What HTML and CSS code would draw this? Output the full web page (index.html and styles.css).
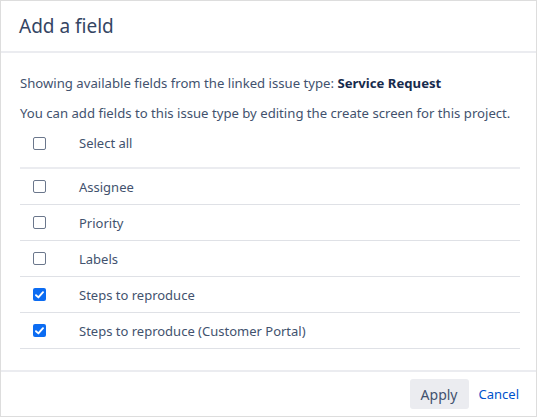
FILE: index.html
```html
<!DOCTYPE html>
<html>
<head>
    <meta charset="utf-8" />
    <title>Add a field</title>
    <link rel="stylesheet" href="styles.css">
</head>
<body>
    <div class="dialog">
        <div class="dialog-header">
            <h2>Add a field</h2>
        </div>
        <div class="dialog-body">
            <p>Showing available fields from the linked issue type: <strong>Service Request</strong></p>
            <p>You can add fields to this issue type by editing the create screen for this project.</p>
            <div class="field-list">
                <label class="field-row head">
                    <span class="check"></span>
                    <span class="name">Select all</span>
                </label>
                <label class="field-row">
                    <span class="check"></span>
                    <span class="name">Assignee</span>
                </label>
                <label class="field-row">
                    <span class="check"></span>
                    <span class="name">Priority</span>
                </label>
                <label class="field-row">
                    <span class="check"></span>
                    <span class="name">Labels</span>
                </label>
                <label class="field-row">
                    <span class="check checked">
                        <svg width="9" height="8" viewBox="0 0 9 8"><path d="M1 4.2 L3.4 6.4 L8 1.2" fill="none" stroke="#fff" stroke-width="1.9" stroke-linecap="round" stroke-linejoin="round"/></svg>
                    </span>
                    <span class="name">Steps to reproduce</span>
                </label>
                <label class="field-row">
                    <span class="check checked">
                        <svg width="9" height="8" viewBox="0 0 9 8"><path d="M1 4.2 L3.4 6.4 L8 1.2" fill="none" stroke="#fff" stroke-width="1.9" stroke-linecap="round" stroke-linejoin="round"/></svg>
                    </span>
                    <span class="name">Steps to reproduce (Customer Portal)</span>
                </label>
            </div>
        </div>
        <div class="dialog-footer">
            <button class="btn">Apply</button>
            <a class="link" href="#">Cancel</a>
        </div>
    </div>
</body>
</html>
```

FILE: styles.css
```css
html, body {
    margin: 0;
    padding: 0;
    background-color: #fff;
    font-family: "Noto Sans", "Open Sans", sans-serif;
    font-size: 13px;
    color: #172b4d;
}

.dialog {
    box-sizing: border-box;
    width: 537px;
    height: 417px;
    border: 1px solid #dddddd;
    display: flex;
    flex-direction: column;
}

.dialog-header {
    height: 50px;
    padding: 0 18px;
    display: flex;
    align-items: center;
    border-bottom: 2px solid #ebecf0;
}

    .dialog-header h2 {
        margin: 0;
        font-size: 19px;
        font-weight: 400;
        color: #344563;
    }

.dialog-body {
    flex: 1;
    padding: 20px 16px 0 19px;
}

    .dialog-body p {
        margin: 0 0 10px 0;
        line-height: 20px;
        font-size: 13.15px;
        color: #42526e;
    }

        .dialog-body p:last-of-type {
            margin-bottom: 0;
        }

        .dialog-body p strong {
            color: #172b4d;
            font-weight: 700;
        }

.field-row {
    display: flex;
    align-items: center;
    height: 35px;
    border-bottom: 1px solid #dfe1e6;
    color: #42526e;
}

    .field-row.head {
        height: 40px;
        padding-bottom: 4px;
        border-bottom: 2px solid #ebecf0;
    }

    .field-row .check {
        box-sizing: border-box;
        width: 13px;
        height: 13px;
        margin-left: 13px;
        margin-right: 33px;
        border: 1px solid #6b778c;
        border-radius: 2px;
        display: flex;
        align-items: center;
        justify-content: center;
    }

        .field-row .check.checked {
            border: none;
            background-color: #0c6cf2;
        }

.dialog-footer {
    height: 44px;
    border-top: 2px solid #ebecf0;
    display: flex;
    align-items: center;
    justify-content: flex-end;
    padding: 0 17px 0 0;
}

.btn {
    height: 30px;
    padding: 0 11px;
    border: none;
    border-radius: 3px;
    background-color: #ebecf0;
    font-family: inherit;
    font-size: 14px;
    color: #42526e;
}

.link {
    margin-left: 10px;
    font-size: 13px;
    color: #0052cc;
    text-decoration: none;
}
```
